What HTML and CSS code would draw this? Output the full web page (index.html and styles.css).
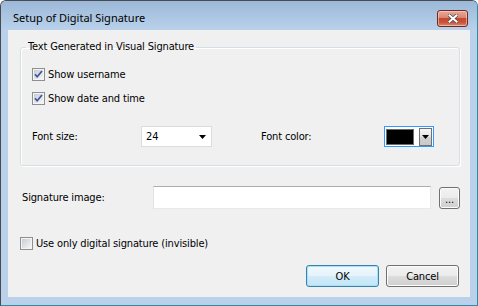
FILE: index.html
```html
<!DOCTYPE html>
<html>
<head>
<meta charset="utf-8">
<link rel="stylesheet" href="styles.css">
</head>
<body>
<div class="window">
  <div class="titlebar">
    <span class="title">Setup of Digital Signature</span>
    <button class="close" aria-label="Close">
      <svg width="10" height="9" viewBox="0 0 10 9">
        <path d="M1.5 1.5 L8.5 7.5 M8.5 1.5 L1.5 7.5" stroke="#4e4e4e" stroke-width="3.6" stroke-linecap="square" fill="none"/>
        <path d="M1.5 1.5 L8.5 7.5 M8.5 1.5 L1.5 7.5" stroke="#ffffff" stroke-width="2" stroke-linecap="square" fill="none"/>
      </svg>
    </button>
  </div>
  <div class="client">
    <fieldset class="group">
      <legend>Text Generated in Visual Signature</legend>
      <label class="check">
        <span class="box"><svg width="9" height="9" viewBox="0 0 9 9"><path d="M1 4.2 L3.2 6.8 L8 1" stroke="#3b53a0" stroke-width="1.7" fill="none"/></svg></span>
        <span>Show username</span>
      </label>
      <label class="check row2">
        <span class="box"><svg width="9" height="9" viewBox="0 0 9 9"><path d="M1 4.2 L3.2 6.8 L8 1" stroke="#3b53a0" stroke-width="1.7" fill="none"/></svg></span>
        <span>Show date and time</span>
      </label>
      <div class="font-row">
        <span class="lbl-size">Font size:</span>
        <div class="combo">
          <span>24</span>
          <svg width="7" height="4" viewBox="0 0 7 4"><polygon points="0,0 7,0 3.5,4" fill="#000"/></svg>
        </div>
        <span class="lbl-color">Font color:</span>
        <div class="picker">
          <span class="swatch"></span>
          <span class="dropbtn"><svg width="7" height="4" viewBox="0 0 7 4"><polygon points="0,0 7,0 3.5,4" fill="#000"/></svg></span>
        </div>
      </div>
    </fieldset>
    <div class="sig-row">
      <span class="lbl-sig">Signature image:</span>
      <div class="textbox"></div>
      <button class="btn browse">...</button>
    </div>
    <label class="check invisible">
      <span class="box"></span>
      <span>Use only digital signature (invisible)</span>
    </label>
    <div class="buttons">
      <button class="btn push default">OK</button>
      <button class="btn push">Cancel</button>
    </div>
  </div>
</div>
</body>
</html>
```

FILE: styles.css
```css
* { box-sizing: border-box; }
html, body { margin: 0; padding: 0; }
body {
  width: 478px;
  height: 306px;
  overflow: hidden;
  background: #ffffff;
  font-family: "DejaVu Sans Condensed", "DejaVu Sans", sans-serif;
  font-stretch: condensed;
  font-size: 11px;
  letter-spacing: -0.15px;
  color: #000;
}
.window {
  width: 478px;
  height: 306px;
  border: 1px solid;
  border-color: #474a4e #2b8ca3 #2b8ca3 #474a4e;
  border-radius: 6px 6px 0 0;
  background: #b9d1ea;
  display: flex;
  flex-direction: column;
  overflow: hidden;
}
.titlebar {
  flex: none;
  height: 29px;
  display: flex;
  align-items: flex-start;
  padding-left: 12px;
  background: linear-gradient(#9cb8d8, #b9d1ea);
}
.title {
  flex: 1;
  font-family: "Noto Sans", "Open Sans", sans-serif;
  font-stretch: normal;
  font-size: 11px;
  letter-spacing: 0;
  line-height: 16px;
  margin-top: 9px;
  color: #000;
}
.close {
  flex: none;
  width: 31px;
  height: 17px;
  margin: 9px 9px 0 0;
  padding: 0;
  border: 1px solid #6d2a22;
  border-radius: 3px;
  background: linear-gradient(#e9a998 0%, #d98670 45%, #c5492f 50%, #c9503a 75%, #de8a70 100%);
  box-shadow: inset 0 0 0 1px rgba(255, 220, 210, 0.55);
  display: flex;
  align-items: center;
  justify-content: center;
}
.close svg { display: block; }
.client {
  flex: 1;
  margin: 0 7px 8px 7px;
  background: #f0f0f0;
  padding: 10px 10px 0 12px;
  display: flex;
  flex-direction: column;
}
.group {
  margin: 0;
  padding: 14px 11px 18px 11px;
  border: 1px solid #d5dfe5;
  border-radius: 3px;
  box-shadow: inset 1px 1px 0 #ffffff, 1px 1px 0 #ffffff;
  min-width: 0;
}
.group legend {
  padding: 0 2px;
  margin-left: -6px;
  line-height: 14px;
  font-size: 11px;
}
.check {
  display: flex;
  align-items: center;
  gap: 3px;
  height: 13px;
  line-height: 13px;
  white-space: nowrap;
}
.box {
  flex: none;
  width: 13px;
  height: 13px;
  border: 1px solid #8e8f8f;
  padding: 1px;
  background: linear-gradient(135deg, #c8ccd2, #f6f6f6) content-box, #f4f4f4;
  display: flex;
  align-items: center;
  justify-content: center;
}
.box svg { display: block; overflow: visible; }
.row2 { margin-top: 11px; }
.font-row {
  margin-top: 21px;
  height: 21px;
  display: flex;
  align-items: center;
}
.lbl-size { width: 109px; flex: none; }
.combo {
  flex: none;
  width: 71px;
  height: 21px;
  border: 1px solid #dcdcdc;
  background: #ffffff;
  display: flex;
  align-items: center;
  justify-content: space-between;
  padding: 0 5px 0 4px;
}
.combo svg { display: block; }
.lbl-color { margin-left: 49px; width: 123px; flex: none; }
.picker {
  flex: none;
  width: 50px;
  height: 21px;
  border: 1px solid #3399ff;
  background: #ffffff;
  display: flex;
  align-items: center;
  padding-left: 1px;
}
.swatch {
  width: 28px;
  height: 16px;
  border: 1px solid #6b6b6b;
  background: #000000;
}
.dropbtn {
  margin-left: 5px;
  width: 13px;
  height: 18px;
  border: 1px solid #707070;
  background: linear-gradient(#f6f6f6, #e2e2e2 50%, #d0d0d0 50%, #c9c9c9);
  display: flex;
  justify-content: center;
  align-items: flex-start;
  padding-top: 6px;
}
.dropbtn svg { display: block; }
.sig-row {
  margin-top: 20px;
  height: 23px;
  display: flex;
  align-items: center;
}
.lbl-sig { width: 133px; padding-left: 2px; flex: none; }
.textbox {
  flex: none;
  width: 278px;
  height: 23px;
  background: #ffffff;
  border: 1px solid;
  border-color: #abadb3 #e3e9ef #e3e9ef #e2e3ea;
}
.btn {
  font-family: inherit;
  font-stretch: condensed;
  font-size: 11px;
  letter-spacing: -0.15px;
  color: #000;
  border: 1px solid #707070;
  border-radius: 3px;
  background: linear-gradient(#f2f2f2 0%, #ebebeb 50%, #dddddd 50%, #cfcfcf 100%);
  box-shadow: inset 0 0 0 1px #fcfcfc;
  padding: 0;
}
.browse {
  margin-left: 8px;
  width: 21px;
  height: 22px;
  line-height: 24px;
  text-align: center;
}
.invisible { margin-top: 28px; }
.buttons {
  margin-top: 15px;
  margin-right: 1px;
  display: flex;
  justify-content: flex-end;
  gap: 7px;
}
.push {
  width: 73px;
  height: 22px;
  text-align: center;
}
.default {
  border-color: #3c7fb1;
  box-shadow: inset 0 0 0 1px #a6e3f8;
  background: linear-gradient(#f0f8fc 0%, #e5f3fb 50%, #d2ecf9 50%, #c4e5f6 100%);
}
```
